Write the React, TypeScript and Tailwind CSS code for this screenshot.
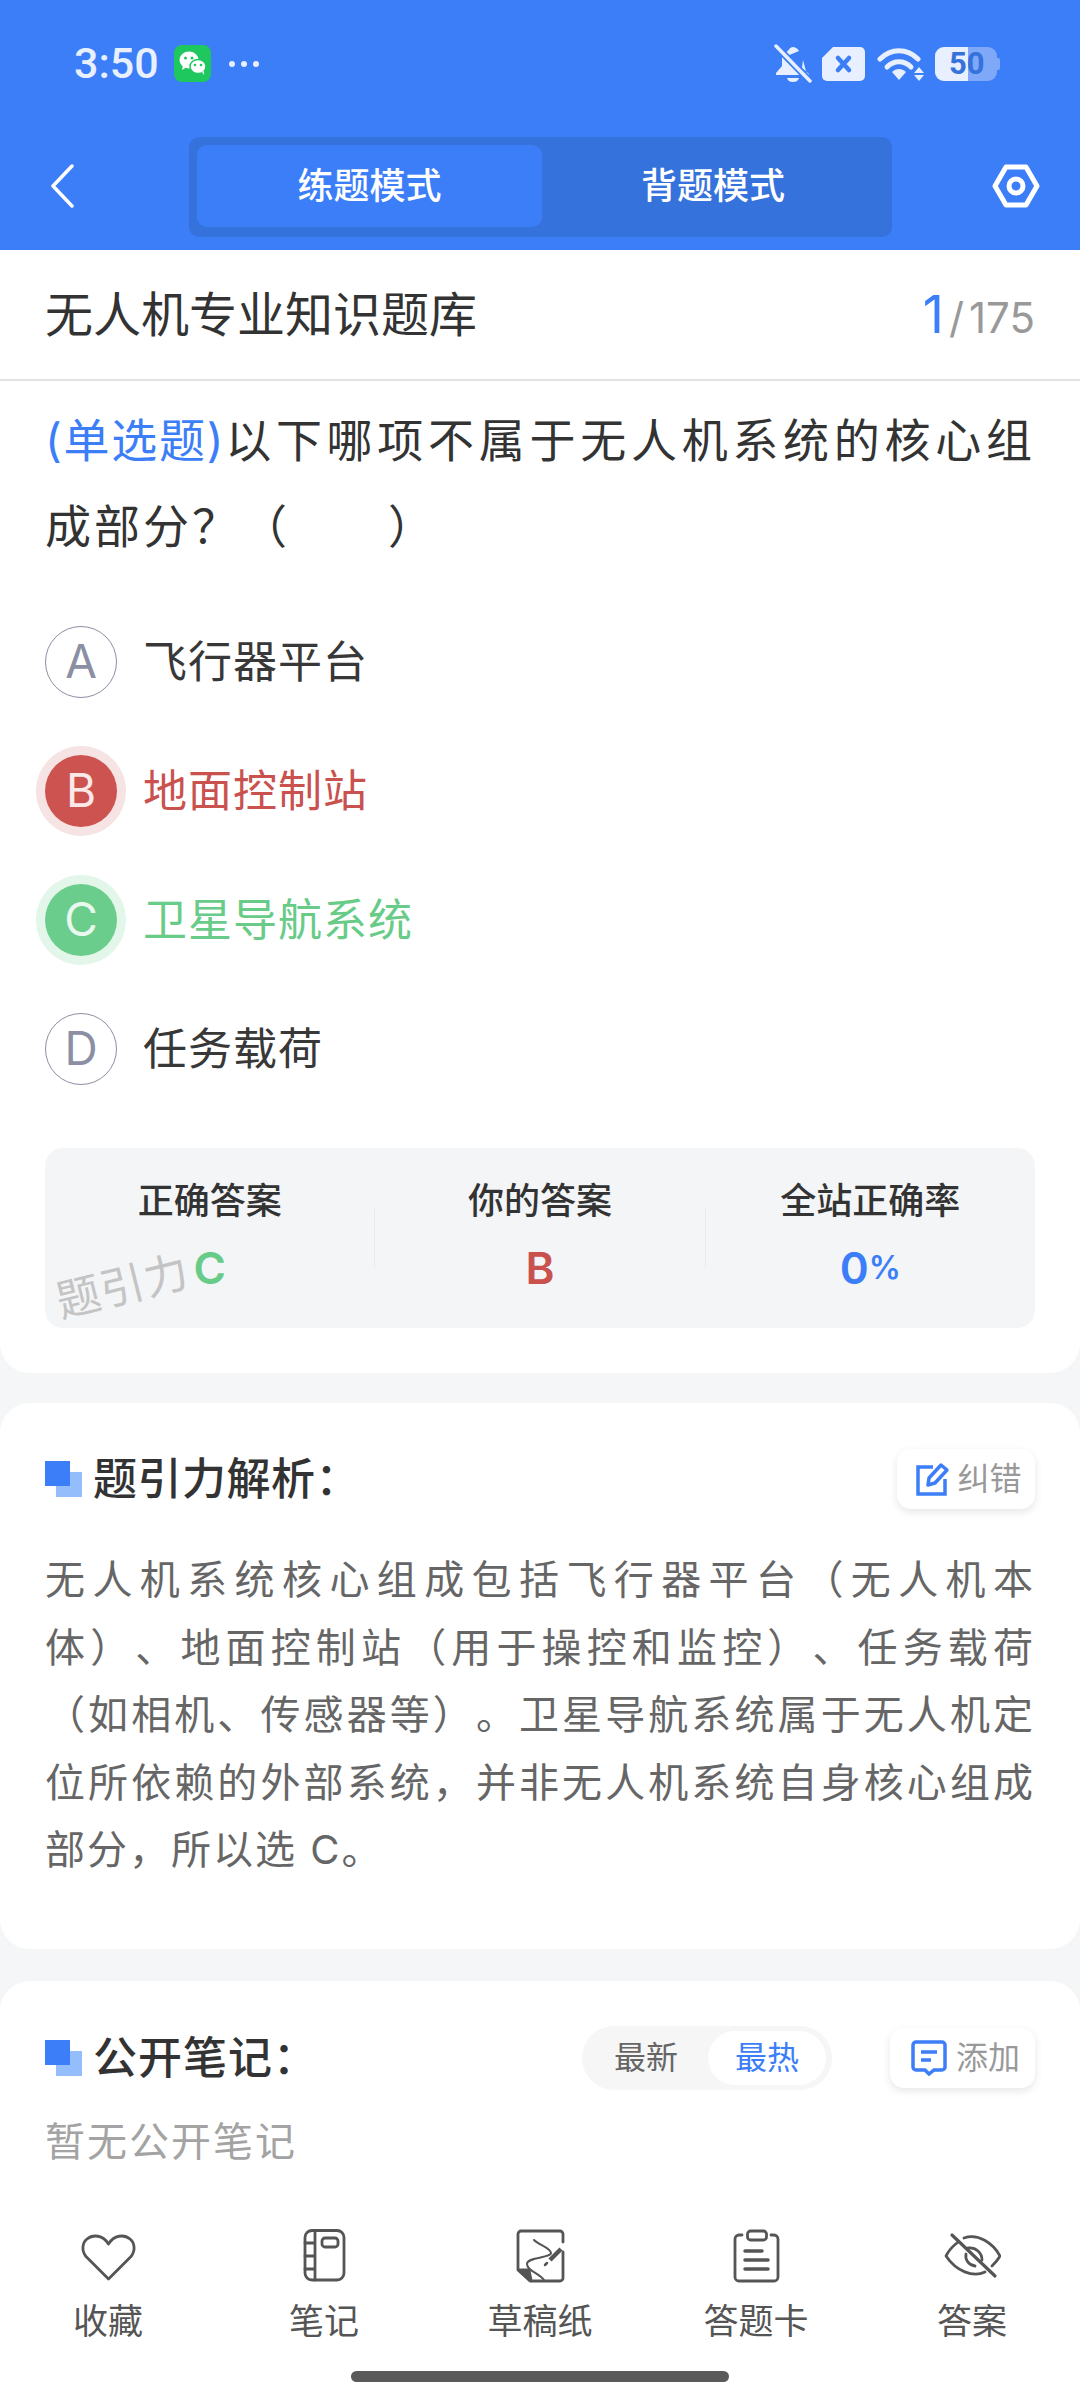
const CJK = "font-['Inter','Noto_Sans_CJK_SC',sans-serif]";

const StatusBar = () => (
  <div className="flex h-[125px] items-center justify-between pl-[74px] pr-[80px] pt-[2px]">
    <div className="flex items-center">
      <span className="font-['Roboto'] text-[43px] font-medium leading-none text-[#e8effe]">3:50</span>
      {/* WeChat */}
      <svg width="37" height="37" viewBox="0 0 37 37" className="ml-[15px]">
        <rect width="37" height="37" rx="8" fill="#1fc75f" />
        <ellipse cx="15" cy="15" rx="9.5" ry="8.5" fill="#fff" />
        <path d="M9 20l-1 5 5-3z" fill="#fff" />
        <ellipse cx="24" cy="21.5" rx="8" ry="7" stroke="#1fc75f" strokeWidth="1.5" fill="#fff" />
        <path d="M28 27l2 3 0-4z" fill="#fff" />
        <circle cx="11.5" cy="13" r="1.5" fill="#1fc75f" />
        <circle cx="18" cy="13" r="1.5" fill="#1fc75f" />
        <circle cx="21" cy="20" r="1.3" fill="#1fc75f" />
        <circle cx="27" cy="20" r="1.3" fill="#1fc75f" />
      </svg>
      <svg width="30" height="8" viewBox="0 0 30 8" className="ml-[18px]" fill="#e8effe">
        <circle cx="3" cy="4" r="3" />
        <circle cx="15" cy="4" r="3" />
        <circle cx="27" cy="4" r="3" />
      </svg>
    </div>
    <div className="flex items-center">
      {/* muted bell */}
      <svg width="38" height="40" viewBox="0 0 38 40" fill="#e8effe">
        <path d="M19 3c-2 0-3 1-3.5 2L8 13v9l-6 7v2h25L13 12l12-5c-2-3-4-4-6-4zM29 16l-1 8 7 6v1h-2z" />
        <path d="M13 34h12c-1 3-3 4-6 4s-5-1-6-4z" />
        <path d="M2 2l34 35" stroke="#3b7ef8" strokeWidth="7" />
        <path d="M2 2l34 35" stroke="#e8effe" strokeWidth="3.5" strokeLinecap="round" />
      </svg>
      {/* no sim */}
      <svg width="43" height="34" viewBox="0 0 43 34" className="ml-[10px]">
        <path d="M11 0h27a5 5 0 0 1 5 5v24a5 5 0 0 1-5 5H5a5 5 0 0 1-5-5V11z" fill="#e8effe" />
        <path d="M16 11l11 12M27 11L16 23" stroke="#3b7ef8" strokeWidth="4.5" strokeLinecap="round" />
      </svg>
      {/* wifi */}
      <svg width="48" height="34" viewBox="0 0 48 34" className="ml-[12px]" fill="none">
        <path d="M3 12C14 1 30 1 41 12" stroke="#e8effe" strokeWidth="5" strokeLinecap="round" />
        <path d="M10 20c7-7 17-7 24 0" stroke="#e8effe" strokeWidth="5" strokeLinecap="round" />
        <path d="M15 25c4-4 10-4 14 0l-7 8z" fill="#e8effe" />
        <path d="M42 20l5 6H37zM42 34l5-6H37z" fill="#e8effe" />
      </svg>
      {/* battery */}
      <div className="relative ml-[10px] flex h-[34px] w-[62px] items-center overflow-hidden rounded-[9px] bg-[#7fa8f8]">
        <div className="absolute inset-y-0 left-0 w-[33px] bg-[#e8effe]" />
        <span className="relative w-full pl-[14px] font-['Roboto'] text-[31px] font-bold leading-none text-[#3672dc]">50</span>
      </div>
      <div className="h-[12px] w-[3px] rounded-r-[2px] bg-[#7fa8f8]" />
    </div>
  </div>
);

const NavBar = () => (
  <div className="flex h-[125px] items-start pl-[50px] pr-[40px] pt-[12px]">
    <svg width="24" height="44" viewBox="0 0 24 44" fill="none" className="mt-[27px]">
      <path d="M22 2L3 22l19 20" stroke="#fff" strokeWidth="3.5" strokeLinecap="round" strokeLinejoin="round" />
    </svg>
    <div className="ml-[115px] flex h-[100px] w-[703px] rounded-[10px] bg-[#3672dc] p-[8px]">
      <div className="flex h-[82px] w-[345px] items-center justify-center rounded-[10px] bg-[#3b7ef8] text-[36px] font-medium text-white">
        练题模式
      </div>
      <div className="flex h-[82px] flex-1 items-center justify-center text-[36px] font-medium text-white">
        背题模式
      </div>
    </div>
    <svg width="48" height="44" viewBox="0 0 48 44" fill="none" className="ml-auto mt-[27px]">
      <path d="M14 3h20l11 19-11 19H14L3 22z" stroke="#fff" strokeWidth="5" strokeLinejoin="round" />
      <circle cx="24" cy="22" r="7" stroke="#fff" strokeWidth="5" />
    </svg>
  </div>
);

const options = [
  { key: "A", text: "飞行器平台", state: "none" },
  { key: "B", text: "地面控制站", state: "wrong" },
  { key: "C", text: "卫星导航系统", state: "right" },
  { key: "D", text: "任务载荷", state: "none" },
];

const Option = ({ opt }: { opt: (typeof options)[number] }) => {
  if (opt.state === "wrong") {
    return (
      <div className="flex h-[129px] items-center">
        <div className="flex h-[72px] w-[72px] items-center justify-center rounded-full bg-[#cd5350] text-[46px] text-[#fbe9e9] ring-[9px] ring-[#f6e3e4]">
          B
        </div>
        <span className="ml-[26px] text-[44px] tracking-[1px] text-[#c9514e]">{opt.text}</span>
      </div>
    );
  }
  if (opt.state === "right") {
    return (
      <div className="flex h-[129px] items-center">
        <div className="flex h-[72px] w-[72px] items-center justify-center rounded-full bg-[#6bcd8b] text-[46px] text-[#e9f8ee] ring-[9px] ring-[#e3f6ea]">
          C
        </div>
        <span className="ml-[26px] text-[44px] tracking-[1px] text-[#68cb88]">{opt.text}</span>
      </div>
    );
  }
  return (
    <div className="flex h-[129px] items-center">
      <div className="flex h-[72px] w-[72px] items-center justify-center rounded-full border-[1.5px] border-[#8c8fa3] text-[46px] text-[#8c8fa3]">
        {opt.key}
      </div>
      <span className="ml-[26px] text-[44px] tracking-[1px] text-[#383838]">{opt.text}</span>
    </div>
  );
};

const Stat = ({ label, children }: { label: string; children: React.ReactNode }) => (
  <div className="flex flex-1 flex-col items-center pt-[30px]">
    <div className="text-[36px] font-medium leading-[46px] text-[#333]">{label}</div>
    <div className="mt-[21px] flex h-[46px] items-center text-[44px] font-semibold leading-none">{children}</div>
  </div>
);

const HeadIcon = () => (
  <svg width="37" height="36" viewBox="0 0 37 36" className="shrink-0">
    <rect x="11" y="11" width="26" height="25" fill="#93bdfb" />
    <rect x="0" y="0" width="25" height="25" fill="#3b7ef8" />
  </svg>
);

const tools = [
  {
    label: "收藏",
    icon: <path d="M29.5 50L7 27.5C2.5 22 3 14 8 10C14 5 24 6 29.5 15C35 6 45 5 51 10C56 14 56.5 22 52 27.5Z" />,
  },
  {
    label: "笔记",
    icon: (
      <>
        <rect x="10" y="1.5" width="39" height="49.5" rx="7" />
        <path d="M20 1.5V51M10 14h10M10 27h10M10 40h10" />
        <rect x="27" y="9" width="16" height="9" rx="3" />
      </>
    ),
  },
  {
    label: "草稿纸",
    icon: (
      <>
        <path d="M52 13V5a3 3 0 0 0-3-3H10a3 3 0 0 0-3 3v36l12 11h30a3 3 0 0 0 3-3V23" />
        <path d="M8 41l10 0 2 10z" fill="#555" />
        <path d="M23 11C28 16 40 19 40 24C40 29 16 28 16 35C16 42 28 44 33 51" strokeWidth="2" />
        <path d="M50 20L39 31" strokeWidth="4.5" strokeLinecap="butt" />
        <path d="M36 34l-2 2" strokeWidth="2.5" />
      </>
    ),
  },
  {
    label: "答题卡",
    icon: (
      <>
        <path d="M15 6h-3a4 4 0 0 0-4 4v38a4 4 0 0 0 4 4h35a4 4 0 0 0 4-4V10a4 4 0 0 0-4-4h-3" />
        <rect x="20.5" y="2" width="19" height="9" rx="3" />
        <path d="M18 22h17M18 31h23M18 40h23" strokeWidth="3.5" />
      </>
    ),
  },
  {
    label: "答案",
    icon: (
      <>
        <path d="M21 9C35 4 50 14 57 27C55 31 52 34 49 37" />
        <path d="M42 43C30 49 13 42 3 27C6 21 10 17 14 14" />
        <path d="M23 25C22 30 25 36 32 37" />
        <path d="M25 19C33 18 39 24 39 31" />
        <path d="M9 6l43 41" strokeWidth="3.2" />
      </>
    ),
  },
];

const BottomBar = () => (
  <div className="flex h-[210px] shrink-0 flex-col bg-white pt-[39px]">
    <div className="grid grid-cols-5">
      {tools.map((t) => (
        <div key={t.label} className="flex flex-col items-center">
          <svg width="58" height="54" viewBox="0 0 58 54" fill="none" stroke="#555" strokeWidth="2.8" strokeLinejoin="round" strokeLinecap="round">
            {t.icon}
          </svg>
          <span className="mt-[15px] text-[35px] leading-[46px] text-[#555]">{t.label}</span>
        </div>
      ))}
    </div>
    <div className="mx-auto mt-[27px] h-[11px] w-[378px] rounded-full bg-[#5a5a5a]" />
  </div>
);

const analysisLines = [
  "无人机系统核心组成包括飞行器平台（无人机本",
  "体）、地面控制站（用于操控和监控）、任务载荷",
  "（如相机、传感器等）。卫星导航系统属于无人机定",
  "位所依赖的外部系统，并非无人机系统自身核心组成",
];

export default function App() {
  return (
    <div className={`flex h-[2400px] w-[1080px] flex-col overflow-hidden bg-[#f5f6f8] ${CJK}`}>
      <div className="shrink-0 bg-[#3b7ef8]">
        <StatusBar />
        <NavBar />
      </div>

      <div className="flex min-h-0 flex-1 flex-col overflow-hidden">
        <div className="shrink-0 rounded-b-[30px] bg-white pb-[45px]">
          <div className="flex h-[131px] items-center justify-between border-b-[2px] border-[#e2e2e2] px-[45px]">
            <span className="text-[48px] leading-none text-[#333]">无人机专业知识题库</span>
            <span className="flex items-baseline text-[#999]">
              <span className="text-[52px] text-[#3b7ef8]">1</span>
              <span className="ml-[5px] text-[42px]">/</span>
              <span className="ml-[5px] text-[42px]">175</span>
            </span>
          </div>

          <div className="px-[45px]">
            <p className="pt-[16px] text-justify text-[46px] leading-[86px] tracking-[3px] text-[#333]">
              <span className="tracking-normal text-[#3b7ef8]">(单选题)</span>以下哪项不属于无人机系统的核心组成部分？（　　）
            </p>

            <div className="mt-[28px]">
              {options.map((o) => (
                <Option key={o.key} opt={o} />
              ))}
            </div>

            <div className="relative mt-[35px] flex h-[180px] rounded-[18px] bg-[#f4f5f7]">
              <Stat label="正确答案">
                <span className="text-[#68cb88]">C</span>
              </Stat>
              <div className="mt-[61px] h-[59px] w-px bg-[#e9eaec]" />
              <Stat label="你的答案">
                <span className="text-[#c9514e]">B</span>
              </Stat>
              <div className="mt-[61px] h-[59px] w-px bg-[#e9eaec]" />
              <Stat label="全站正确率">
                <span className="text-[#3b7ef8]">0</span>
                <span className="text-[32px] text-[#3b7ef8]">%</span>
              </Stat>
              {/* watermark over the stats box */}
              <span className="absolute left-[10px] top-[116px] -rotate-[14deg] text-[44px] leading-none tracking-[1px] text-[#c4c4c4]">
                题引力
              </span>
            </div>
          </div>
        </div>

        <div className="mt-[30px] shrink-0 rounded-[30px] bg-white px-[45px] pb-[65px] pt-[46px]">
          <div className="flex h-[60px] items-center justify-between">
            <div className="flex items-center">
              <HeadIcon />
              <span className="ml-[11px] text-[44px] font-medium leading-none tracking-[0.5px] text-[#333]">题引力解析：</span>
            </div>
            <div className="flex h-[60px] w-[138px] items-center justify-center rounded-[14px] bg-white pl-[6px] shadow-[0_3px_8px_rgba(0,0,0,0.1)]">
              <svg width="34" height="34" viewBox="0 0 34 34" fill="none" stroke="#3b7ef8" strokeWidth="3.5">
                <path d="M17 5H2v27h27V17" />
                <path d="M12 23l1-7L25 3l6 5-12 13z" strokeLinejoin="round" />
              </svg>
              <span className="ml-[7px] text-[32px] leading-none text-[#999]">纠错</span>
            </div>
          </div>
          <div className="mt-[37px] text-[40px] leading-[67.5px] tracking-[2px] text-[#666] [text-spacing-trim:space-all]">
            {analysisLines.map((line) => (
              <div key={line} className="[text-align-last:justify]">
                {line}
              </div>
            ))}
            <div>部分，所以选 C。</div>
          </div>
        </div>

        <div className="mt-[32px] flex-1 rounded-t-[30px] bg-white px-[45px] pt-[45px]">
          <div className="flex h-[64px] items-center">
            <HeadIcon />
            <span className="ml-[11px] text-[44px] font-medium leading-none tracking-[1px] text-[#333]">公开笔记：</span>
            <div className="ml-auto flex h-[64px] w-[250px] items-center rounded-full bg-[#f6f6f6] pl-[2px] pr-[6px]">
              <span className="flex-1 text-center text-[32px] text-[#666]">最新</span>
              <span className="flex h-[54px] w-[118px] items-center justify-center rounded-full bg-white text-[32px] text-[#3b7ef8]">
                最热
              </span>
            </div>
            <div className="ml-[58px] flex h-[60px] w-[145px] items-center justify-center rounded-[14px] bg-white pl-[6px] shadow-[0_3px_8px_rgba(0,0,0,0.1)]">
              <svg width="36" height="36" viewBox="0 0 36 36" fill="none" stroke="#3b7ef8" strokeWidth="3.5">
                <path d="M5 2h26a3 3 0 0 1 3 3v22a3 3 0 0 1-3 3H23l-5 4-4-4H5a3 3 0 0 1-3-3V5a3 3 0 0 1 3-3z" />
                <path d="M10 12h16M10 20h10" />
              </svg>
              <span className="ml-[9px] text-[32px] leading-none text-[#999]">添加</span>
            </div>
          </div>
          <p className="mt-[22px] text-[40px] leading-[60px] tracking-[2px] text-[#a3a3a3]">暂无公开笔记</p>
        </div>
      </div>

      <BottomBar />
    </div>
  );
}
